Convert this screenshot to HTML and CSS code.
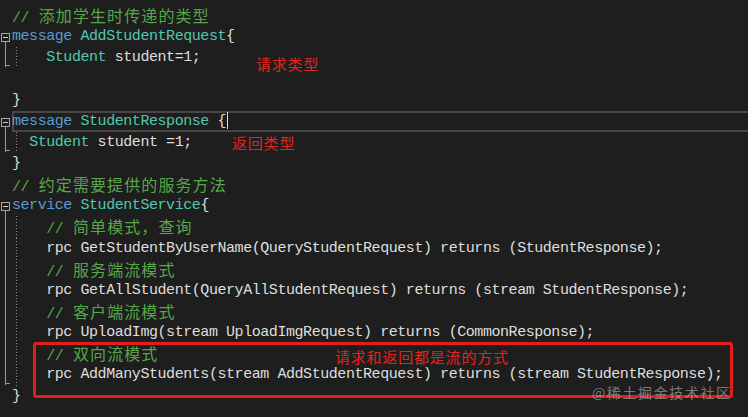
FILE: index.html
```html
<!DOCTYPE html>
<html lang="zh-CN">
<head>
<meta charset="utf-8">
<title>proto</title>
<link rel="stylesheet" href="styles.css">
</head>
<body>
<div class="editor">
  <div class="line"><span class="gut"></span><span class="code"><span class="cm">// <span class="zh">添加学生时传递的类型</span></span></span></div>
  <div class="line"><span class="gut fs"><i class="box"></i></span><span class="code"><span class="kw">message</span> <span class="ty">AddStudentRequest</span>{</span></div>
  <div class="line"><span class="gut fe"></span><span class="code g">    <span class="ty">Student</span> student=1;</span></div>
  <div class="line"><span class="gut"></span><span class="code"> </span></div>
  <div class="line"><span class="gut"></span><span class="code">}</span></div>
  <div class="line"><span class="gut fs"><i class="box"></i></span><span class="code cur"><span class="kw">message</span> <span class="ty">StudentResponse</span> {<i class="caret"></i></span></div>
  <div class="line"><span class="gut fe"></span><span class="code g">  <span class="ty">Student</span> student =1;</span></div>
  <div class="line"><span class="gut"></span><span class="code">}</span></div>
  <div class="line"><span class="gut"></span><span class="code"><span class="cm">// <span class="zh">约定需要提供的服务方法</span></span></span></div>
  <div class="line"><span class="gut fs"><i class="box"></i></span><span class="code"><span class="kw">service</span> <span class="ty">StudentService</span>{</span></div>
  <div class="line"><span class="gut fm"></span><span class="code g">    <span class="cm">// <span class="zh">简单模式，查询</span></span></span></div>
  <div class="line"><span class="gut fm"></span><span class="code g">    rpc GetStudentByUserName(QueryStudentRequest) returns (StudentResponse);</span></div>
  <div class="line"><span class="gut fm"></span><span class="code g">    <span class="cm">// <span class="zh">服务端流模式</span></span></span></div>
  <div class="line"><span class="gut fm"></span><span class="code g">    rpc GetAllStudent(QueryAllStudentRequest) returns (stream StudentResponse);</span></div>
  <div class="line"><span class="gut fm"></span><span class="code g">    <span class="cm">// <span class="zh">客户端流模式</span></span></span></div>
  <div class="line"><span class="gut fm"></span><span class="code g">    rpc UploadImg(stream UploadImgRequest) returns (CommonResponse);</span></div>
  <div class="line"><span class="gut fm"></span><span class="code g">    <span class="cm">// <span class="zh">双向流模式</span></span></span></div>
  <div class="line"><span class="gut fe"></span><span class="code g">    rpc AddManyStudents(stream AddStudentRequest) returns (stream StudentResponse);</span></div>
  <div class="line"><span class="gut"></span><span class="code">}</span></div>

  <div class="note note-req">请求类型</div>
  <div class="note note-res">返回类型</div>
  <div class="hl-box"></div>
  <div class="note note-stream">请求和返回都是流的方式</div>
  <div class="watermark">@稀土掘金技术社区</div>
</div>
</body>
</html>
```
FILE: styles.css
```css
html, body {
  margin: 0;
  padding: 0;
  background: #1e1e1e;
}

.editor {
  position: relative;
  width: 748px;
  height: 417px;
  overflow: hidden;
  padding-top: 5px;
  box-sizing: border-box;
  font-family: "Liberation Mono", "Noto Sans CJK SC", monospace;
  font-size: 15px;
  letter-spacing: -0.44px;
  color: #dedede;
}

.line {
  display: flex;
  height: 21.15px;
  line-height: 21.15px;
}

.gut {
  flex: none;
  width: 12px;
  display: flex;
  flex-direction: column;
  align-items: flex-start;
}

.fs {
  padding: 7px 0 0 1px;
  box-sizing: border-box;
}

.fs::after {
  content: "";
  flex: 1;
  margin-left: 4px;
  border-left: 1px solid #9a9a9a;
}

.box {
  display: block;
  width: 9px;
  height: 9px;
  box-sizing: border-box;
  border: 1px solid #a8a8a8;
  background: linear-gradient(#d0d0d0, #d0d0d0) center / 5px 1px no-repeat;
}

.fm {
  background: linear-gradient(#9a9a9a, #9a9a9a) 5px 0 / 1px 100% no-repeat;
}

.fe {
  background:
    linear-gradient(#9a9a9a, #9a9a9a) 5px 0 / 1px calc(100% - 1px) no-repeat,
    linear-gradient(#9a9a9a, #9a9a9a) 5px calc(100% - 2px) / 5px 1px no-repeat;
}

.code {
  flex: 1;
  white-space: pre;
  position: relative;
}

.g {
  background: repeating-linear-gradient(to bottom, #8a8a8a 0 1px, transparent 1px 3px) 4px 0 / 1px 100% no-repeat;
}

.cur {
  box-shadow: inset 2px 0 0 #464646, inset 0 2px 0 #464646, inset 0 -2px 0 #464646;
}

.caret {
  display: inline-block;
  width: 1px;
  height: 17px;
  background: #dcdcdc;
  vertical-align: middle;
  margin-left: 1px;
}

.kw { color: #569cd6; }
.ty { color: #4ec9b0; }
.cm { color: #57a64a; }

.zh {
  font-family: "Noto Sans CJK SC", sans-serif;
  font-size: 16px;
  letter-spacing: 1.1px;
  margin-left: 1px;
}

.note {
  position: absolute;
  font-family: "Noto Sans CJK SC", sans-serif;
  font-size: 15px;
  line-height: 14px;
  letter-spacing: 0.8px;
  color: #e3241e;
}

.note-req { left: 256px; top: 57px; }
.note-res { left: 232px; top: 136px; }
.note-stream { left: 335px; top: 350px; }

.hl-box {
  position: absolute;
  left: 33px;
  top: 342px;
  width: 700px;
  height: 56px;
  box-sizing: border-box;
  border: 3px solid #e31d1a;
  border-radius: 3px;
}

.watermark {
  position: absolute;
  left: 592px;
  top: 385px;
  font-family: "Noto Sans CJK SC", sans-serif;
  font-size: 14px;
  line-height: 15px;
  letter-spacing: 1.6px;
  color: rgba(200, 200, 200, 0.55);
}
```
